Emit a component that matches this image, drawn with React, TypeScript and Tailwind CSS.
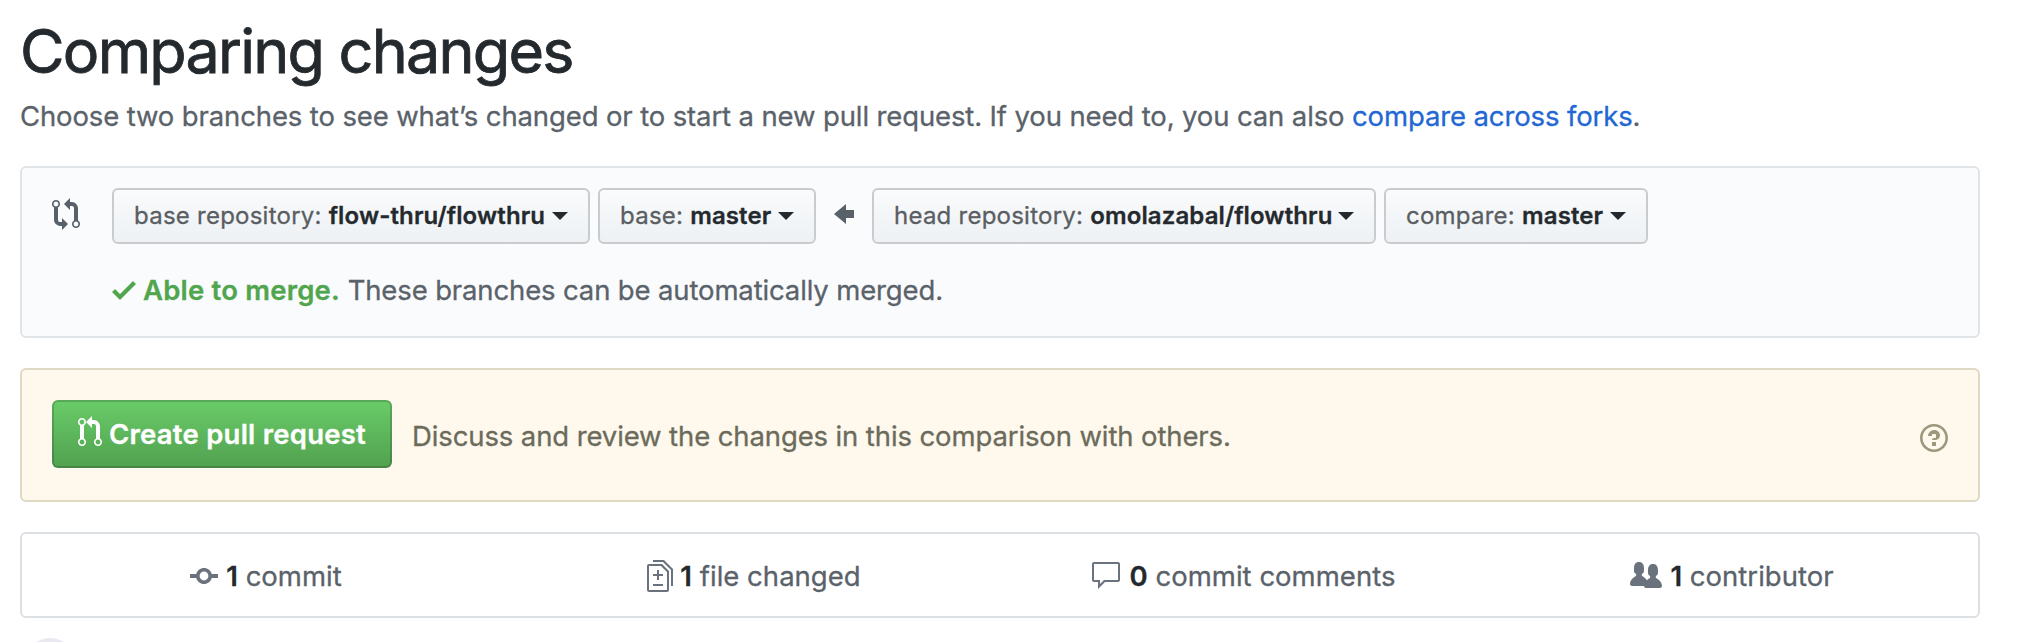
import type { ReactNode } from "react";

const ICONS = {
  compare:
    "M5 12H4c-.27-.02-.48-.11-.69-.31-.21-.2-.3-.42-.31-.69V4.72A1.993 1.993 0 0 0 2 1a1.993 1.993 0 0 0-1 3.72V11c.03.78.34 1.47.94 2.06.6.59 1.28.91 2.06.94h1v2l3-3-3-3v2zM2 1.8c.66 0 1.2.55 1.2 1.2 0 .65-.55 1.2-1.2 1.2C1.35 4.2.8 3.65.8 3c0-.65.55-1.2 1.2-1.2zm11 9.48V5c-.03-.78-.34-1.47-.94-2.06-.6-.59-1.28-.91-2.06-.94H9V0L6 3l3 3V4h1c.27.02.48.11.69.31.21.2.3.42.31.69v6.28A1.993 1.993 0 0 0 12 15a1.993 1.993 0 0 0 1-3.72zm-1 2.92c-.66 0-1.2-.55-1.2-1.2 0-.65.55-1.2 1.2-1.2.65 0 1.2.55 1.2 1.2 0 .65-.55 1.2-1.2 1.2z",
  pullRequest:
    "M11 11.28V5c-.03-.78-.34-1.47-.94-2.06C9.46 2.35 8.78 2.03 8 2H7V0L4 3l3 3V4h1c.27.02.48.11.69.31.21.2.3.42.31.69v6.28A1.993 1.993 0 0 0 10 15a1.993 1.993 0 0 0 1-3.72zm-1 2.92c-.66 0-1.2-.55-1.2-1.2 0-.65.55-1.2 1.2-1.2.65 0 1.2.55 1.2 1.2 0 .65-.55 1.2-1.2 1.2zM4 3c0-1.11-.89-2-2-2a1.993 1.993 0 0 0-1 3.72v6.56A1.993 1.993 0 0 0 2 15a1.993 1.993 0 0 0 1-3.72V4.72c.59-.34 1-.98 1-1.72zm-.8 10c0 .66-.55 1.2-1.2 1.2-.65 0-1.2-.55-1.2-1.2 0-.65.55-1.2 1.2-1.2.65 0 1.2.55 1.2 1.2zM2 4.2C1.34 4.2.8 3.65.8 3c0-.65.55-1.2 1.2-1.2.65 0 1.2.55 1.2 1.2 0 .65-.55 1.2-1.2 1.2z",
  check: "M12 5l-8 8-4-4 1.5-1.5L4 10l6.5-6.5L12 5z",
  arrow: "M6 3L0 8l6 5v-3h4V6H6z",
  question:
    "M6 10h2v2H6v-2zm4-3.5C10 8.64 8 9 8 9H6c0-.55.45-1 1-1h.5c.28 0 .5-.22.5-.5v-1c0-.28-.22-.5-.5-.5h-1c-.28 0-.5.22-.5.5V7H4c0-1.5 1.5-3 3-3s3 1 3 2.5zM7 2.3c3.14 0 5.7 2.56 5.7 5.7s-2.56 5.7-5.7 5.7A5.71 5.71 0 0 1 1.3 8c0-3.14 2.56-5.7 5.7-5.7zM7 1C3.14 1 0 4.14 0 8s3.14 7 7 7 7-3.14 7-7-3.14-7-7-7z",
  commit:
    "M10.86 7c-.45-1.72-2-3-3.86-3-1.86 0-3.41 1.28-3.86 3H0v2h3.14c.45 1.72 2 3 3.86 3 1.86 0 3.41-1.28 3.86-3H14V7h-3.14zM7 10.2c-1.22 0-2.2-.98-2.2-2.2 0-1.22.98-2.2 2.2-2.2 1.22 0 2.2.98 2.2 2.2 0 1.22-.98 2.2-2.2 2.2z",
  diff: "M6 7h2v1H6v2H5V8H3V7h2V5h1v2zm-3 6h5v-1H3v1zM7.5 2L11 5.5V15c0 .55-.45 1-1 1H1c-.55 0-1-.45-1-1V3c0-.55.45-1 1-1h6.5zM10 6L7 3H1v12h9V6zM8.5 0H3v1h5l4 4v8h1V4.5L8.5 0z",
  comment:
    "M14 1H2c-.55 0-1 .45-1 1v8c0 .55.45 1 1 1h2v3.5L7.5 11H14c.55 0 1-.45 1-1V2c0-.55-.45-1-1-1zm0 9H7l-2 2v-2H2V2h12v8z",
  people:
    "M16 12.999c0 .439-.45 1-1 1H7.995c-.539 0-.994-.447-.995-.999H1c-.54 0-1-.561-1-1 0-2.634 3-4 3-4s.229-.409 0-1c-.841-.621-1.058-.59-1-3 .058-2.419 1.367-3 2.5-3s2.442.58 2.5 3c.058 2.41-.159 2.379-1 3-.229.59 0 1 0 1s1.549.711 2.42 2.088C9.196 9.369 10 8.999 10 8.999s.229-.409 0-1c-.841-.62-1.058-.59-1-3 .058-2.419 1.367-3 2.5-3s2.437.581 2.495 3c.059 2.41-.158 2.38-1 3-.229.59 0 1 0 1s3.005 1.366 3.005 4",
};

function Icon({ name, units, className }: { name: keyof typeof ICONS; units: number; className?: string }) {
  return (
    <svg
      viewBox={`0 0 ${units} 16`}
      width={units * 2}
      height={32}
      fill="currentColor"
      fillRule="evenodd"
      className={`shrink-0 ${className ?? ""}`}
    >
      <path d={ICONS[name]} />
    </svg>
  );
}

function Select({ label, value, className }: { label: string; value: string; className: string }) {
  return (
    <button
      className={`flex h-14 shrink-0 items-center justify-between rounded-[6px] border-2 border-[#c9cbce] bg-linear-to-b from-[#fafbfc] to-[#eef2f5] to-90% px-5 pb-px text-[24px] leading-10 ${className}`}
    >
      <span className="whitespace-pre">
        <span className="tracking-[0.24px] text-[#5a5e62]">{label} </span>
        <span className="font-semibold tracking-[0.12px] text-[#24292e]">{value}</span>
      </span>
      <svg viewBox="0 0 16 8" width="16" height="8" className="mt-px fill-[#24292e]">
        <path d="M0 0h16L8 8z" />
      </svg>
    </button>
  );
}

function Stat({ icon, count, label, className }: { icon: ReactNode; count: string; label: string; className: string }) {
  return (
    <li className={`flex items-center justify-center ${className}`}>
      <span className="flex text-[#6a737d]">{icon}</span>
      <span className="-mt-px whitespace-pre">
        <span className="font-semibold text-[#24292e]">{count}</span>
        <span className="tracking-[0.02px]"> {label}</span>
      </span>
    </li>
  );
}

export default function App() {
  return (
    <div className="h-[642px] overflow-hidden bg-white pr-[38px] pl-5 font-['Inter',sans-serif] text-[27.5px] leading-[42px] text-[#5a626a] [-webkit-text-stroke:0.3px]">
      <h1 className="pt-[15px] text-[61px] leading-[72px] tracking-[-1.75px] text-[#24292e] [-webkit-text-stroke:0.8px]">
        Comparing changes
      </h1>
      <p className="mt-2 tracking-[-0.127px] whitespace-nowrap">
        Choose two branches to see what’s changed or to start a new pull request. If you need to, you can also{" "}
        <a href="#" className="text-[#2267d3]">compare across forks</a>.
      </p>

      <section className="mt-[29px] flex h-[172px] rounded-[6px] border-2 border-[#e1e4e9] bg-[#fafbfd] pt-5 pl-[30px]">
        <Icon name="compare" units={14} className="mt-[10px] text-[#586069]" />
        <div className="ml-8">
          <div className="flex items-center">
            <Select label="base repository:" value="flow-thru/flowthru" className="w-[478px]" />
            <Select label="base:" value="master" className="ml-2 w-[218px]" />
            <Icon name="arrow" units={10} className="mr-[18px] ml-[18px] -mt-1 text-[#586069]" />
            <Select label="head repository:" value="omolazabal/flowthru" className="w-[504px]" />
            <Select label="compare:" value="master" className="ml-2 w-[264px]" />
          </div>
          <p className="mt-[25px] flex items-center whitespace-pre">
            <Icon name="check" units={12} className="text-[#51a64d]" />
            <span className="ml-[7px] font-semibold tracking-[0.2px] text-[#51a64d]">Able to merge.</span>
            <span className="tracking-[-0.14px]"> These branches can be automatically merged.</span>
          </p>
        </div>
      </section>

      <section className="mt-[30px] flex h-[134px] items-center rounded-[6px] border-2 border-[#dfd8c3] bg-[#fff8ec] pr-[30px] pl-[30px] text-[#6b6b5c]">
        <button className="-mt-0.5 flex h-[68px] w-[340px] items-center rounded-[6px] border-2 border-[#1b1f23]/20 bg-linear-to-b from-[#6acc69] to-[#51a14f] bg-origin-border pl-6 font-semibold tracking-[0.24px] whitespace-nowrap text-white">
          <Icon name="pullRequest" units={12} className="-mt-1" />
          <span className="ml-[7px]">Create pull request</span>
        </button>
        <span className="mt-px ml-5 tracking-[-0.115px] whitespace-nowrap">
          Discuss and review the changes in this comparison with others.
        </span>
        <Icon name="question" units={14} className="mt-[5px] ml-auto text-[#9c987d]" />
      </section>

      <ul className="mt-[30px] grid h-[86px] grid-cols-4 rounded-[6px] border-2 border-[#dce0e5] pt-0.5">
        <Stat icon={<Icon name="commit" units={14} />} count="1" label="commit" className="gap-[8px] pr-px" />
        <Stat icon={<Icon name="diff" units={13} />} count="1" label="file changed" className="gap-[7px] pr-[3px]" />
        <Stat icon={<Icon name="comment" units={16} />} count="0" label="commit comments" className="gap-[8px] pr-1" />
        <Stat icon={<Icon name="people" units={16} />} count="1" label="contributor" className="gap-[8px] pr-[3px]" />
      </ul>

      <div className="mt-5 ml-1 size-[52px] rounded-full bg-[#e8e9f1]" />
    </div>
  );
}
